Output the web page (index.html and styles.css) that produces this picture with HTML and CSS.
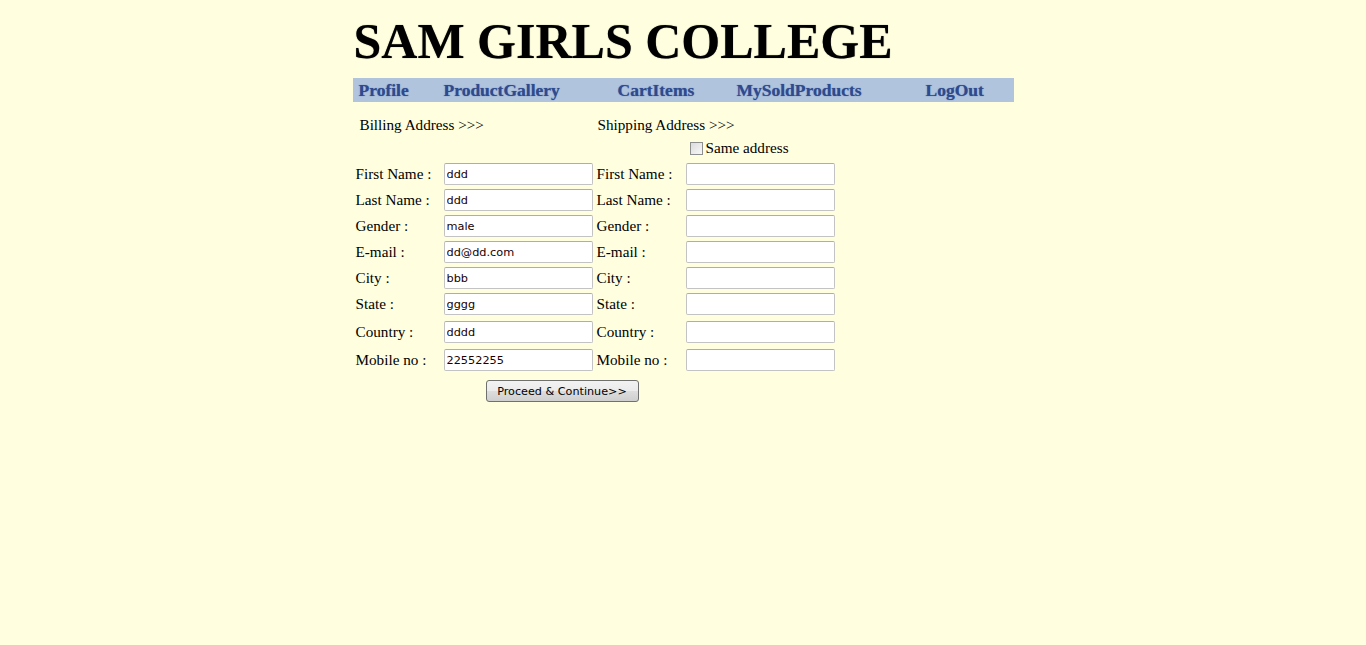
FILE: index.html
```html
<!DOCTYPE html>
<html>
<head>
<meta charset="utf-8">
<title>SAM GIRLS COLLEGE</title>
<link rel="stylesheet" href="styles.css">
</head>
<body>
<div class="page">
  <h1 class="title">SAM GIRLS COLLEGE</h1>
  <nav class="menu">
    <a class="menu-item w1" href="#">Profile</a>
    <a class="menu-item w2" href="#">ProductGallery</a>
    <a class="menu-item w3" href="#">CartItems</a>
    <a class="menu-item w4" href="#">MySoldProducts</a>
    <a class="menu-item w5" href="#">LogOut</a>
  </nav>
  <form class="form">
    <div class="row heads">
      <span class="head head-bill">Billing Address &gt;&gt;&gt;</span>
      <span class="head head-ship">Shipping Address &gt;&gt;&gt;</span>
    </div>
    <div class="row same">
      <label class="same-label"><input type="checkbox" class="check"> Same address</label>
    </div>
    <div class="row field">
      <span class="lbl">First Name :</span><input class="txt" value="ddd">
      <span class="lbl lbl2">First Name :</span><input class="txt">
    </div>
    <div class="row field">
      <span class="lbl">Last Name :</span><input class="txt" value="ddd">
      <span class="lbl lbl2">Last Name :</span><input class="txt">
    </div>
    <div class="row field">
      <span class="lbl">Gender :</span><input class="txt" value="male">
      <span class="lbl lbl2">Gender :</span><input class="txt">
    </div>
    <div class="row field">
      <span class="lbl">E-mail :</span><input class="txt" value="dd@dd.com">
      <span class="lbl lbl2">E-mail :</span><input class="txt">
    </div>
    <div class="row field">
      <span class="lbl">City :</span><input class="txt" value="bbb">
      <span class="lbl lbl2">City :</span><input class="txt">
    </div>
    <div class="row field">
      <span class="lbl">State :</span><input class="txt" value="gggg">
      <span class="lbl lbl2">State :</span><input class="txt">
    </div>
    <div class="row field wide">
      <span class="lbl">Country :</span><input class="txt" value="dddd">
      <span class="lbl lbl2">Country :</span><input class="txt">
    </div>
    <div class="row field wide">
      <span class="lbl">Mobile no :</span><input class="txt" value="22552255">
      <span class="lbl lbl2">Mobile no :</span><input class="txt">
    </div>
    <div class="row actions">
      <button type="button" class="btn">Proceed &amp; Continue&gt;&gt;</button>
    </div>
  </form>
</div>
</body>
</html>
```
FILE: styles.css
```css
html, body {
  margin: 0;
  padding: 0;
  background: #ffffe0;
}
body {
  font-family: "Liberation Serif", "Times New Roman", serif;
  font-size: 15.2px;
  color: #000;
}
.page {
  width: 661px;
  margin: 0 auto;
}
.title {
  margin: 0 0 9px 1px;
  padding-top: 13px;
  font-size: 50px;
  line-height: 56px;
  font-weight: bold;
  white-space: nowrap;
  text-shadow: 0 0 1px rgba(0,0,0,0.6);
}
.menu {
  display: flex;
  height: 24px;
  background: #b0c4de;
}
.menu-item {
  display: block;
  box-sizing: border-box;
  padding-left: 6px;
  line-height: 25px;
  font-size: 17.5px;
  font-weight: bold;
  color: #2f4a8e;
  text-decoration: none;
  white-space: nowrap;
  text-shadow: 0 0 1px rgba(47,74,142,0.7);
}
.w1 { width: 85px; }
.w2 { width: 174px; }
.w3 { width: 119px; }
.w4 { width: 189px; }
.w5 { flex: 1; }
.form {
  margin: 12px 0 0 0;
  display: flex;
  flex-direction: column;
}
.row {
  display: flex;
  align-items: center;
}
.heads {
  height: 22px;
}
.head-bill {
  padding-left: 7px;
  width: 237px;
}
.head-ship {
  padding-left: 1px;
}
.same {
  height: 22px;
  margin-top: 1px;
  padding-left: 337px;
}
.same-label {
  display: flex;
  align-items: center;
}
.check {
  -webkit-appearance: none;
  appearance: none;
  width: 13px;
  height: 13px;
  margin: 0 3px 0 0;
  border: 1px solid #8e8f8f;
  background: linear-gradient(135deg, #dcdcdc, #f8f8f8);
  box-sizing: border-box;
}
.field {
  height: 22px;
  margin-top: 4px;
}
.wide {
  margin-top: 6px;
}
.lbl {
  box-sizing: border-box;
  width: 91px;
  padding-left: 3px;
  white-space: nowrap;
}
.lbl2 {
  width: 95px;
  padding-left: 6px;
  margin-left: -2px;
}
.txt {
  box-sizing: border-box;
  width: 149px;
  height: 22px;
  margin: 0;
  padding: 0 3px 0 2px;
  border: 1px solid #c3c3c3;
  border-top-color: #abadb3;
  border-radius: 2px;
  background: #fff;
  font-family: "DejaVu Sans", Verdana, sans-serif;
  font-size: 11.3px;
  color: #1a0000;
  outline: none;
}
.actions {
  margin-top: 9px;
  padding-left: 133px;
}
.btn {
  box-sizing: border-box;
  width: 153px;
  height: 22px;
  padding: 0;
  border: 1px solid #707070;
  border-radius: 3px;
  background: linear-gradient(#f2f2f2 0%, #ebebeb 50%, #dddddd 51%, #cfcfcf 100%);
  font-family: "DejaVu Sans", Verdana, sans-serif;
  font-size: 11.2px;
  color: #000;
}
```
